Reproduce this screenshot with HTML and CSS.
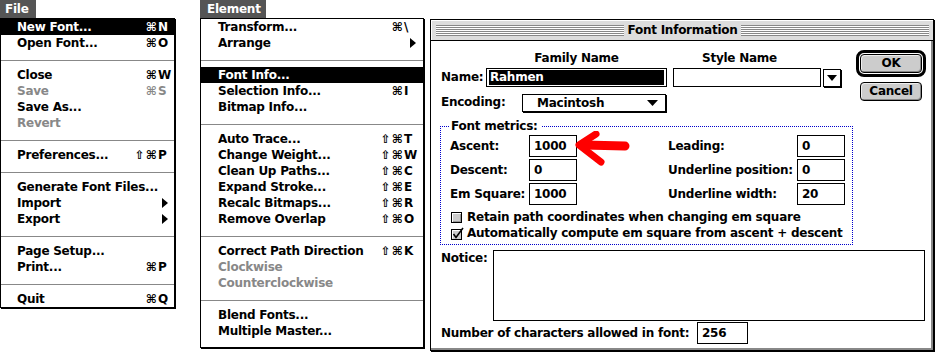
FILE: index.html
```html
<!DOCTYPE html>
<html lang="en">
<head>
  <meta charset="UTF-8">
  <title>Font Information</title>
  <link rel="stylesheet" href="styles.css">
</head>
<body>
  <div class="desk">
    <div class="menu menu_file">
      <div class="menu_title">File</div>
      <ul class="menu_list">
        <li class="item hi"><span>New Font...</span><span class="mods">⌘</span><span class="key">N</span></li>
        <li class="item"><span>Open Font...</span><span class="mods">⌘</span><span class="key">O</span></li>
        <li class="sep"></li>
        <li class="item"><span>Close</span><span class="mods">⌘</span><span class="key">W</span></li>
        <li class="item off"><span>Save</span><span class="mods">⌘</span><span class="key">S</span></li>
        <li class="item"><span>Save As...</span></li>
        <li class="item off"><span>Revert</span></li>
        <li class="sep"></li>
        <li class="item"><span>Preferences...</span><span class="mods">⇧⌘</span><span class="key">P</span></li>
        <li class="sep"></li>
        <li class="item"><span>Generate Font Files...</span></li>
        <li class="item"><span>Import</span><span></span><span class="key"><i class="sub_arrow"></i></span></li>
        <li class="item"><span>Export</span><span></span><span class="key"><i class="sub_arrow"></i></span></li>
        <li class="sep"></li>
        <li class="item"><span>Page Setup...</span></li>
        <li class="item"><span>Print...</span><span class="mods">⌘</span><span class="key">P</span></li>
        <li class="sep"></li>
        <li class="item"><span>Quit</span><span class="mods">⌘</span><span class="key">Q</span></li>
      </ul>
    </div>

    <div class="menu menu_elem">
      <div class="menu_title">Element</div>
      <ul class="menu_list">
        <li class="item"><span>Transform...</span><span class="mods">⌘</span><span class="key">\</span></li>
        <li class="item"><span>Arrange</span><span></span><span class="key"><i class="sub_arrow"></i></span></li>
        <li class="sep"></li>
        <li class="item hi"><span>Font Info...</span></li>
        <li class="item"><span>Selection Info...</span><span class="mods">⌘</span><span class="key">I</span></li>
        <li class="item"><span>Bitmap Info...</span></li>
        <li class="sep"></li>
        <li class="item"><span>Auto Trace...</span><span class="mods">⇧⌘</span><span class="key">T</span></li>
        <li class="item"><span>Change Weight...</span><span class="mods">⇧⌘</span><span class="key">W</span></li>
        <li class="item"><span>Clean Up Paths...</span><span class="mods">⇧⌘</span><span class="key">C</span></li>
        <li class="item"><span>Expand Stroke...</span><span class="mods">⇧⌘</span><span class="key">E</span></li>
        <li class="item"><span>Recalc Bitmaps...</span><span class="mods">⇧⌘</span><span class="key">R</span></li>
        <li class="item"><span>Remove Overlap</span><span class="mods">⇧⌘</span><span class="key">O</span></li>
        <li class="sep"></li>
        <li class="item"><span>Correct Path Direction</span><span class="mods">⇧⌘</span><span class="key">K</span></li>
        <li class="item off"><span>Clockwise</span></li>
        <li class="item off"><span>Counterclockwise</span></li>
        <li class="sep"></li>
        <li class="item"><span>Blend Fonts...</span></li>
        <li class="item"><span>Multiple Master...</span></li>
      </ul>
    </div>

    <div class="window">
      <div class="titlebar">
        <span class="stripes"></span>
        <span class="title">Font Information</span>
        <span class="stripes"></span>
      </div>
      <div class="pane">
        <div class="top">
          <div class="top_left">
            <div class="heads">
              <span class="head_family">Family Name</span>
              <span class="head_style">Style Name</span>
            </div>
            <div class="row_name">
              <span class="lbl lbl_name">Name:</span>
              <span class="field_name"><span class="sel">Rahmen</span></span>
              <span class="field_style"></span>
              <span class="drop"><svg width="10" height="6" viewBox="0 0 10 6"><polygon points="0,0 10,0 5,6" fill="#000"/></svg></span>
            </div>
            <div class="row_enc">
              <span class="lbl lbl_enc">Encoding:</span>
              <span class="popup"><span>Macintosh</span><svg width="11" height="6" viewBox="0 0 11 6"><polygon points="0,0 11,0 5.5,6" fill="#000"/></svg></span>
            </div>
          </div>
          <div class="buttons">
            <div class="ok_ring"><span class="btn">OK</span></div>
            <span class="btn btn_cancel">Cancel</span>
          </div>
        </div>

        <fieldset class="metrics">
          <legend>Font metrics:</legend>
          <div class="metric_grid">
            <span class="lbl">Ascent:</span><span class="num">1000</span><span></span>
            <span class="lbl">Leading:</span><span class="num">0</span>
            <span class="lbl">Descent:</span><span class="num">0</span><span></span>
            <span class="lbl">Underline position:</span><span class="num">0</span>
            <span class="lbl">Em Square:</span><span class="num">1000</span><span></span>
            <span class="lbl">Underline width:</span><span class="num">20</span>
            <svg class="red_arrow" width="64" height="40" viewBox="0 0 64 40">
              <path d="M55 15 L14 14" stroke="#f00" stroke-width="9" stroke-linecap="round" fill="none"/>
              <path d="M26 3 L9 14 L31 31" stroke="#f00" stroke-width="7" stroke-linecap="round" stroke-linejoin="round" fill="none"/>
            </svg>
          </div>
          <div class="check check_first"><span class="box"></span>Retain path coordinates when changing em square</div>
          <div class="check">
            <svg class="box_on" width="13" height="13" viewBox="0 0 13 13">
              <rect x="0.5" y="2.5" width="10" height="10" fill="#ccc" stroke="#000"/>
              <path d="M1.5 11.5 V3.5 H9.5" stroke="#fff" fill="none"/>
              <path d="M2.5 7 L5 10.5 L12 1" stroke="#000" stroke-width="1.6" fill="none"/>
            </svg>Automatically compute em square from ascent + descent
          </div>
        </fieldset>

        <div class="row_notice">
          <span class="lbl lbl_notice">Notice:</span>
          <div class="area"></div>
        </div>
        <div class="row_count">
          <span class="lbl lbl_count">Number of characters allowed in font:</span>
          <span class="num num_count">256</span>
        </div>
      </div>
    </div>
  </div>
</body>
</html>
```

FILE: styles.css
```css
*,*:before,*:after{
  box-sizing: border-box;
}
body{
  margin: 0;
  width: 935px;
  height: 352px;
  overflow: hidden;
  background: #fff;
  color: #000;
  font: bold 12px "DejaVu Sans", sans-serif;
  letter-spacing: -0.25px;
}
.desk{
  display: flex;
  align-items: flex-start;
}

/* menus */
.menu_title{
  height: 18px;
  line-height: 18px;
  background: #555;
  color: #fff;
  padding-left: 5px;
}
.menu_file .menu_title{
  width: 36px;
}
.menu_elem{
  margin-left: 25px;
}
.menu_elem .menu_title{
  width: 66px;
  padding-left: 7px;
}
.menu_list{
  list-style: none;
  margin: 0;
  padding: 0;
  background: #fff;
  border: 1px solid #000;
  box-shadow: 1px 1px 0 #000;
}
.menu_file .menu_list{
  width: 175px;
}
.menu_elem .menu_list{
  width: 224px;
  padding-bottom: 8px;
}
.item{
  display: grid;
  grid-template-columns: 1fr 30px 16px;
  height: 16px;
  line-height: 16px;
  padding-left: 16px;
  white-space: nowrap;
}
.menu_elem .item{
  grid-template-columns: 1fr 30px 19px;
  padding-left: 17px;
}
.mods{
  text-align: right;
  letter-spacing: 1px;
}
.hi{
  background: #000;
  color: #fff;
}
.off{
  color: #888;
}
.sep{
  height: 1px;
  margin: 9px 0 6px;
  background: #888;
}
.sub_arrow{
  display: block;
  width: 0;
  height: 0;
  margin: 3px 0 0 4px;
  border-left: 6px solid #000;
  border-top: 5px solid transparent;
  border-bottom: 5px solid transparent;
}
.menu_elem .sub_arrow{
  margin-left: 6px;
}

/* dialog window */
.window{
  margin: 19px 0 0 6px;
  width: 504px;
  height: 332px;
  display: flex;
  flex-direction: column;
  background: #fff;
  border: 1px solid #000;
  box-shadow: 1px 1px 0 #000;
}
.titlebar{
  height: 21px;
  display: flex;
  align-items: center;
  padding: 0 4px 0 5px;
  background: #ddd;
  border-bottom: 1px solid #000;
  box-shadow: inset 1px 1px #fff;
}
.stripes{
  flex: 1;
  height: 11px;
  background: repeating-linear-gradient(#888 0 1px, #fff 1px 2px);
}
.title{
  padding: 0 3px;
  white-space: nowrap;
}
.pane{
  flex: 1;
  padding-left: 10px;
  border-right: 2px solid #888;
  border-bottom: 2px solid #888;
  white-space: nowrap;
}
.lbl{
  display: block;
}
.top{
  display: flex;
}
.top_left{
  padding-top: 9px;
}
.heads{
  display: flex;
  height: 16px;
  line-height: 16px;
}
.head_family{
  width: 181px;
  margin-left: 45px;
  text-align: center;
}
.head_style{
  margin-left: 6px;
  padding-left: 29px;
}
.row_name{
  display: flex;
  height: 19px;
  margin-top: 2px;
  line-height: 19px;
}
.lbl_name{
  width: 45px;
}
.field_name{
  width: 181px;
  padding: 1px 2px;
  border: 1px solid #000;
}
.sel{
  display: block;
  height: 15px;
  line-height: 15px;
  padding-left: 1px;
  background: #000;
  color: #fff;
}
.field_style{
  width: 148px;
  margin-left: 6px;
  border: 1px solid #000;
}
.drop{
  width: 18px;
  height: 18px;
  margin: 1px 0 0 2px;
  display: flex;
  align-items: center;
  justify-content: center;
  border: 1px solid #000;
  box-shadow: 1px 1px 0 #000;
}
.row_enc{
  display: flex;
  height: 19px;
  margin-top: 6px;
  line-height: 19px;
}
.lbl_enc{
  width: 81px;
}
.popup{
  width: 144px;
  height: 18px;
  margin-top: 1px;
  display: flex;
  align-items: center;
  justify-content: space-between;
  padding: 0 7px 0 14px;
  line-height: 16px;
  border: 1px solid #000;
  box-shadow: 1px 1px 0 #000;
}
.buttons{
  margin-left: 15px;
  padding-top: 9px;
  display: flex;
  flex-direction: column;
  align-items: center;
}
.ok_ring{
  padding: 1px;
  border: 3px solid #000;
  border-radius: 8px;
}
.btn{
  display: block;
  width: 62px;
  height: 19px;
  line-height: 17px;
  text-align: center;
  background: #ccc;
  border: 1px solid #000;
  border-radius: 4px;
  box-shadow: inset 1px 1px #eee, inset -1px -1px #888;
}
.btn_cancel{
  margin-top: 5px;
}

/* font metrics group */
.metrics{
  width: 413px;
  min-width: 0;
  margin: 6px 0 0 -1px;
  padding: 1px 0 3px 9px;
  border: 1px dotted #00c;
}
.metrics legend{
  padding: 0 3px 0 1px;
  line-height: 16px;
}
.metric_grid{
  position: relative;
  display: grid;
  grid-template-columns: 79px 48px 91px 129px 48px;
  grid-auto-rows: 22px;
  row-gap: 2px;
  align-items: center;
}
.num{
  display: block;
  height: 22px;
  line-height: 20px;
  padding-left: 4px;
  border: 1px solid #000;
}
.red_arrow{
  position: absolute;
  left: 120px;
  top: -4px;
}
.check{
  display: flex;
  align-items: center;
  height: 16px;
  padding-left: 1px;
}
.check_first{
  margin-top: 4px;
}
.box{
  width: 11px;
  height: 11px;
  margin-right: 5px;
  background: #ccc;
  border: 1px solid #000;
  box-shadow: inset 1px 1px #fff, inset -1px -1px #999;
}
.box_on{
  margin-right: 3px;
}

/* notice and count */
.row_notice{
  display: flex;
  margin-top: 5px;
  line-height: 16px;
}
.lbl_notice{
  width: 52px;
}
.area{
  width: 432px;
  height: 71px;
  border: 1px solid #000;
}
.row_count{
  display: flex;
  align-items: center;
  margin-top: 1px;
}
.lbl_count{
  width: 256px;
}
.num_count{
  width: 51px;
}
```
